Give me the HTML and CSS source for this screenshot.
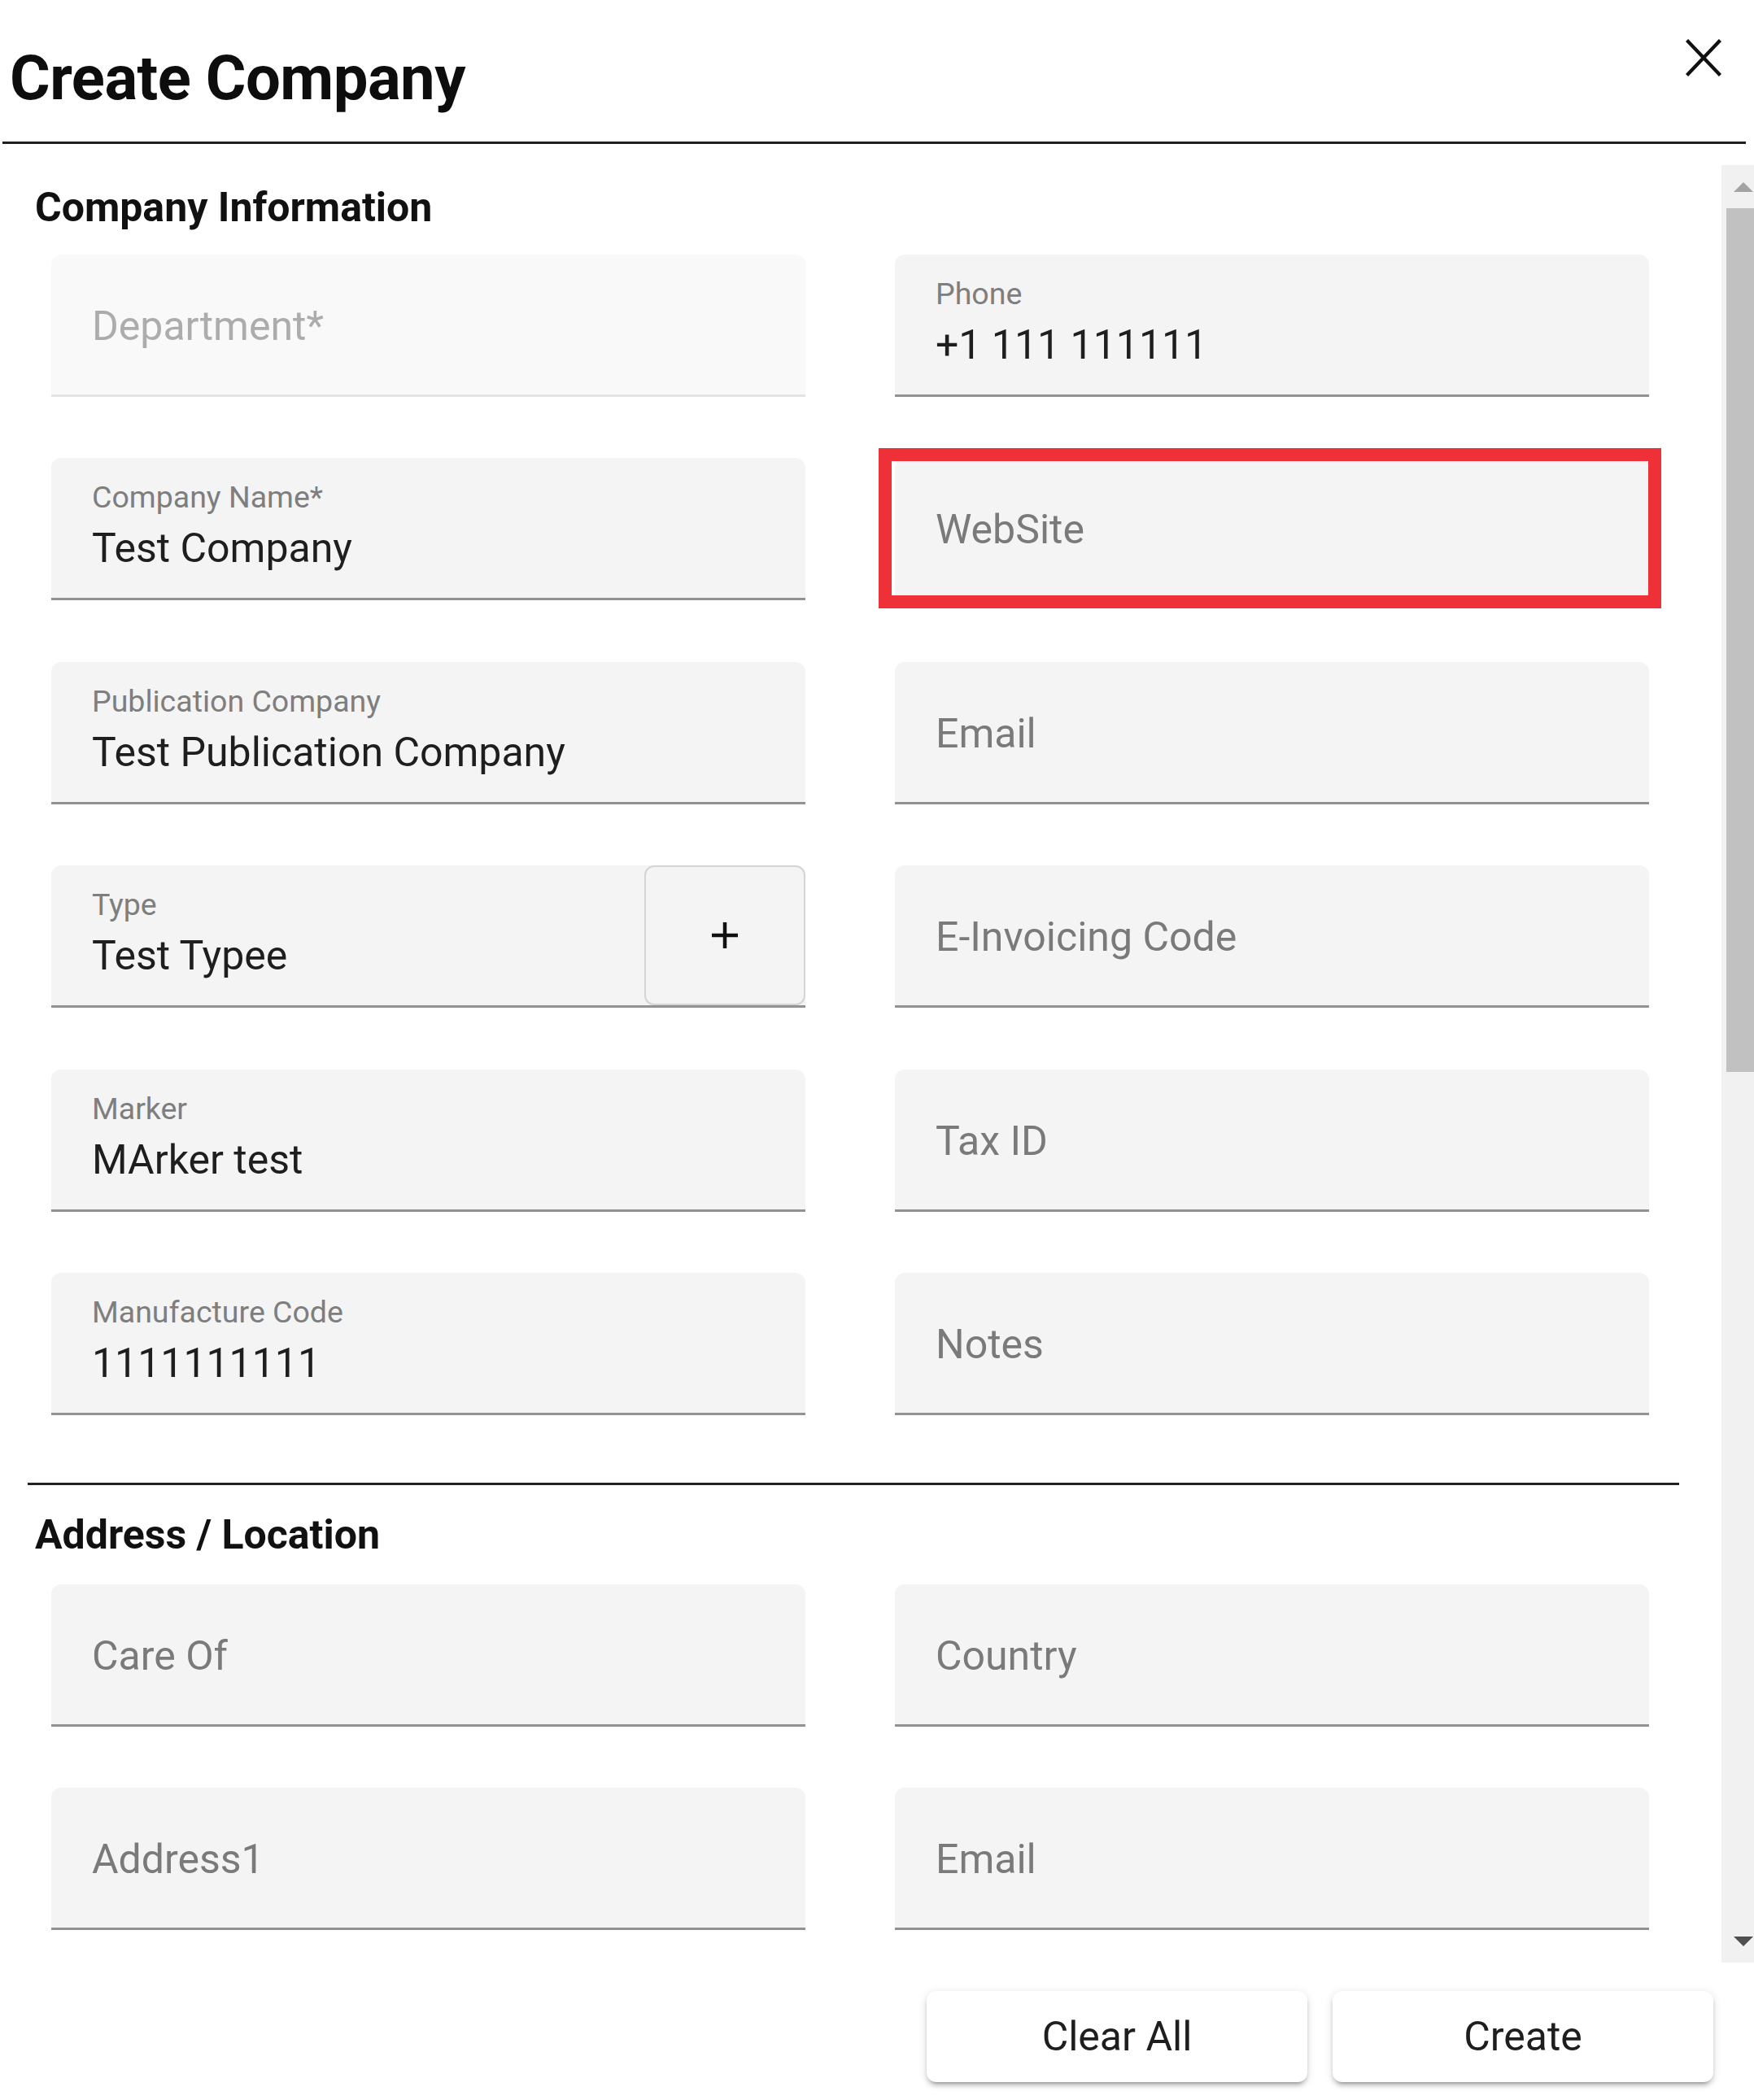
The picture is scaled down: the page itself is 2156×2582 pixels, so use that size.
FILE: index.html
```html
<!DOCTYPE html>
<html lang="en">
<head>
<meta charset="utf-8">
<title>Create Company</title>
<link rel="stylesheet" href="styles.css">
</head>
<body>
<div class="dialog">
  <header class="header">
    <h1 class="title">Create Company</h1>
    <button class="close" aria-label="Close">
      <svg width="44" height="46" viewBox="0 0 44 46"><path d="M1.5 1.5 L42.5 44.5 M42.5 1.5 L1.5 44.5" stroke="#111" stroke-width="4.4" fill="none"/></svg>
    </button>
  </header>

  <div class="main">
    <div class="content">
      <h2 class="section-title">Company Information</h2>
      <div class="grid">
        <div class="field empty disabled"><span class="placeholder">Department*</span></div>
        <div class="field"><span class="label">Phone</span><span class="value">+1 111 111111</span></div>

        <div class="field"><span class="label">Company Name*</span><span class="value">Test Company</span></div>
        <div class="field empty"><span class="placeholder">WebSite</span><span class="highlight"></span></div>

        <div class="field"><span class="label">Publication Company</span><span class="value">Test Publication Company</span></div>
        <div class="field empty"><span class="placeholder">Email</span></div>

        <div class="field with-action">
          <div class="field-body"><span class="label">Type</span><span class="value">Test Typee</span></div>
          <button class="add-btn" aria-label="Add type">
            <svg width="34" height="34" viewBox="0 0 34 34"><path d="M17 1 V33 M1 17 H33" stroke="#111" stroke-width="4.5" fill="none"/></svg>
          </button>
        </div>
        <div class="field empty"><span class="placeholder">E-Invoicing Code</span></div>

        <div class="field"><span class="label">Marker</span><span class="value">MArker test</span></div>
        <div class="field empty"><span class="placeholder">Tax ID</span></div>

        <div class="field"><span class="label">Manufacture Code</span><span class="value">1111111111</span></div>
        <div class="field empty"><span class="placeholder">Notes</span></div>
      </div>

      <hr class="divider">

      <h2 class="section-title">Address / Location</h2>
      <div class="grid">
        <div class="field empty"><span class="placeholder">Care Of</span></div>
        <div class="field empty"><span class="placeholder">Country</span></div>
        <div class="field empty"><span class="placeholder">Address1</span></div>
        <div class="field empty"><span class="placeholder">Email</span></div>
      </div>
    </div>

    <div class="scrollbar">
      <div class="sb-btn">
        <svg width="24" height="12" viewBox="0 0 24 12"><path d="M0 12 L12 0 L24 12 Z" fill="#a3a3a3"/></svg>
      </div>
      <div class="sb-track">
        <div class="sb-thumb"></div>
      </div>
      <div class="sb-btn">
        <svg width="24" height="12" viewBox="0 0 24 12"><path d="M0 0 L24 0 L12 12 Z" fill="#505050"/></svg>
      </div>
    </div>
  </div>

  <footer class="actions">
    <button class="action-btn">Clear All</button>
    <button class="action-btn">Create</button>
  </footer>
</div>
</body>
</html>
```

FILE: styles.css
```css
html, body {
  margin: 0;
  padding: 0;
  background: #ffffff;
}

body {
  font-family: Roboto, "Liberation Sans", Arial, sans-serif;
  color: #1e1e1e;
}

.dialog {
  width: 2156px;
  height: 2582px;
  overflow: hidden;
  display: flex;
  flex-direction: column;
  background: #ffffff;
}

/* ---------- header ---------- */
.header {
  flex: none;
  display: flex;
  justify-content: space-between;
  align-items: flex-start;
  box-sizing: border-box;
  height: 177px;
  width: 2143px;
  margin-left: 3px;
  padding-left: 9px;
  border-bottom: 3px solid #1f1f1f;
}

.title {
  margin: 59px 0 0 0;
  font-size: 76px;
  line-height: 74px;
  font-weight: 700;
  color: #0d0d0d;
  letter-spacing: -0.5px;
}

.close {
  margin: 48px 30px 0 0;
  padding: 0;
  border: none;
  background: transparent;
  line-height: 0;
}

/* ---------- main scroll area ---------- */
.main {
  flex: none;
  display: flex;
  height: 2210px;
  margin-top: 26px;
}

.content {
  flex: none;
  width: 2116px;
  box-sizing: border-box;
  padding: 27px 52px 0 34px;
  overflow: hidden;
}

.section-title {
  margin: 0 0 33px 9px;
  font-size: 50px;
  line-height: 50px;
  font-weight: 700;
  color: #111111;
}

.divider {
  margin: 83px 0 36px 0;
  height: 3px;
  border: none;
  background: #222222;
}

.divider + .section-title {
  margin-bottom: 36px;
}

.grid {
  margin-left: 29px;
  display: grid;
  grid-template-columns: 927px 927px;
  column-gap: 110px;
  row-gap: 75.4px;
}

/* ---------- filled text field ---------- */
.field {
  position: relative;
  height: 175px;
  box-sizing: border-box;
  background: #f4f4f4;
  border-radius: 12px 12px 0 0;
  border-bottom: 3px solid #929292;
  padding: 26px 0 0 50px;
  display: flex;
  flex-direction: column;
}

.label {
  font-size: 37.5px;
  line-height: 44px;
  color: #7e7e7e;
  white-space: nowrap;
}

.value {
  margin-top: 12px;
  font-size: 50px;
  line-height: 59px;
  color: #1e1e1e;
  white-space: nowrap;
}

.field.empty {
  padding-top: 59px;
}

.placeholder {
  font-size: 50px;
  line-height: 59px;
  color: #7a7a7a;
  white-space: nowrap;
}

.field.disabled {
  background: #f9f9f9;
  border-bottom-color: #e4e4e4;
}

.field.disabled .placeholder {
  color: #acacac;
}

.field.with-action {
  flex-direction: row;
  padding: 0;
}

.field-body {
  flex: 1;
  display: flex;
  flex-direction: column;
  padding: 26px 0 0 50px;
}

.add-btn {
  flex: none;
  width: 198px;
  height: 172px;
  box-sizing: border-box;
  border: 2px solid #d4d4d4;
  border-radius: 12px;
  background: transparent;
  display: flex;
  align-items: center;
  justify-content: center;
  padding: 0;
}

/* red annotation box over the WebSite field */
.highlight {
  position: absolute;
  left: -20px;
  top: -12px;
  right: -15px;
  bottom: -13px;
  border: 16px solid #ee3139;
  pointer-events: none;
}

/* ---------- fake classic scrollbar ---------- */
.scrollbar {
  flex: none;
  width: 53px;
  display: flex;
  flex-direction: column;
  background: #f1f1f1;
}

.sb-btn {
  flex: none;
  height: 53px;
  display: flex;
  align-items: center;
  justify-content: center;
}

.sb-track {
  flex: 1;
}

.sb-thumb {
  margin-left: 6px;
  width: 41px;
  height: 1062px;
  background: #c1c1c1;
}

/* ---------- footer actions ---------- */
.actions {
  flex: none;
  display: flex;
  justify-content: flex-end;
  gap: 31px;
  padding: 35px 50px 0 0;
}

.action-btn {
  width: 468px;
  height: 112px;
  border: none;
  border-radius: 12px;
  background: #ffffff;
  font-family: Roboto, "Liberation Sans", Arial, sans-serif;
  font-size: 50px;
  font-weight: 400;
  color: #1e1e1e;
  box-shadow: 0 7px 3px -5px rgba(0, 0, 0, 0.2), 0 5px 5px 0 rgba(0, 0, 0, 0.14), 0 2px 12px 0 rgba(0, 0, 0, 0.12);
}
```
